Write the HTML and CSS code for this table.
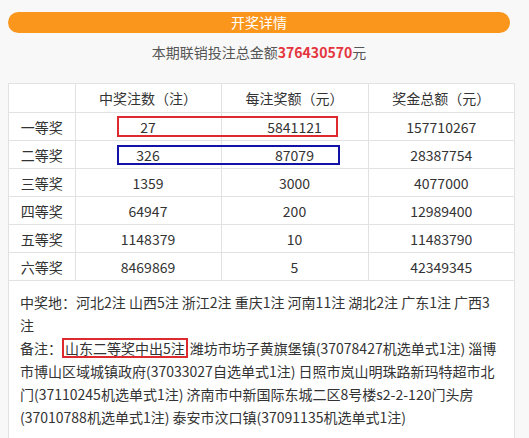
FILE: index.html
```html
<!DOCTYPE html>
<html>
<head>
  <meta charset="UTF-8">
  <title>开奖详情</title>
  <link rel="stylesheet" href="styles.css">
</head>

<body>
  <div class="title">开奖详情</div>
  <p class="sum">本期联销投注总金额<span class="money">376430570</span>元</p>

  <div class="box">
    <table class="prize">
      <colgroup>
        <col class="c1"><col class="c2"><col class="c3"><col class="c4">
      </colgroup>
      <tr><th></th><th>中奖注数（注）</th><th>每注奖额（元）</th><th>奖金总额（元）</th></tr>
      <tr><td>一等奖</td><td>27</td><td>5841121</td><td>157710267</td></tr>
      <tr><td>二等奖</td><td>326</td><td>87079</td><td>28387754</td></tr>
      <tr><td>三等奖</td><td>1359</td><td>3000</td><td>4077000</td></tr>
      <tr><td>四等奖</td><td>64947</td><td>200</td><td>12989400</td></tr>
      <tr><td>五等奖</td><td>1148379</td><td>10</td><td>11483790</td></tr>
      <tr><td>六等奖</td><td>8469869</td><td>5</td><td>42349345</td></tr>
    </table>

    <!-- 标注框 -->
    <div class="mark mark-red"></div>
    <div class="mark mark-blue"></div>

    <div class="notes">
      <p>中奖地：河北2注 山西5注 浙江2注 重庆1注 河南11注 湖北2注 广东1注 广西3注</p>
      <p>备注：<span class="hl">山东二等奖中出5注</span>潍坊市坊子黄旗堡镇(37078427机选单式1注) 淄博市博山区域城镇政府(37033027自选单式1注) 日照市岚山明珠路新玛特超市北门(37110245机选单式1注) 济南市中新国际东城二区8号楼s2-2-120门头房 (37010788机选单式1注) 泰安市汶口镇(37091135机选单式1注)</p>
    </div>
  </div>
</body>

</html>
```

FILE: styles.css
```css
body {
  font-family: "Noto Sans CJK SC", "Noto Sans", sans-serif;
  font-size: 14px;
  color: #333;
  background-color: #f8f8f8;
  margin: 0;
  padding: 12px 0 0 8px;
}

.title {
  width: 502px;
  height: 21px;
  line-height: 21px;
  border-radius: 11px;
  background-color: #fa961c;
  color: #fff;
  text-align: center;
}

.sum {
  width: 502px;
  margin: 10px 0 22px;
  line-height: 18px;
  text-align: center;
  color: #555;
}

.money {
  color: #e4343c;
  font-weight: bold;
}

.box {
  position: relative;
  width: 505px;
  background-color: #fff;
  border: 1px solid #e2e2e2;
}

.prize {
  width: 100%;
  border-collapse: collapse;
  table-layout: fixed;
}

.c1 { width: 66px; }
.c2 { width: 146px; }
.c3 { width: 147px; }

.prize th,
.prize td {
  height: 27px;
  padding: 0;
  border: 1px solid #e2e2e2;
  text-align: center;
  font-weight: normal;
}

.prize tr:first-child th { border-top: none; height: 28px; }
.prize th:first-child,
.prize td:first-child { border-left: none; }
.prize th:last-child,
.prize td:last-child { border-right: none; }

.mark {
  position: absolute;
  left: 108px;
  box-sizing: border-box;
  border: 2px solid;
}

.mark-red {
  top: 32px;
  width: 221px;
  height: 21px;
  border-color: #dc2a2e;
}

.mark-blue {
  top: 61px;
  width: 223px;
  height: 20px;
  border-color: #1212a6;
}

.notes {
  padding: 10px 12px 10px 11px;
  line-height: 23px;
}

.notes p {
  margin: 0;
}

.hl {
  display: inline-block;
  line-height: 16px;
  border: 2px solid #dc2a2e;
  padding: 0 1px;
  margin-right: 2px;
}
```
